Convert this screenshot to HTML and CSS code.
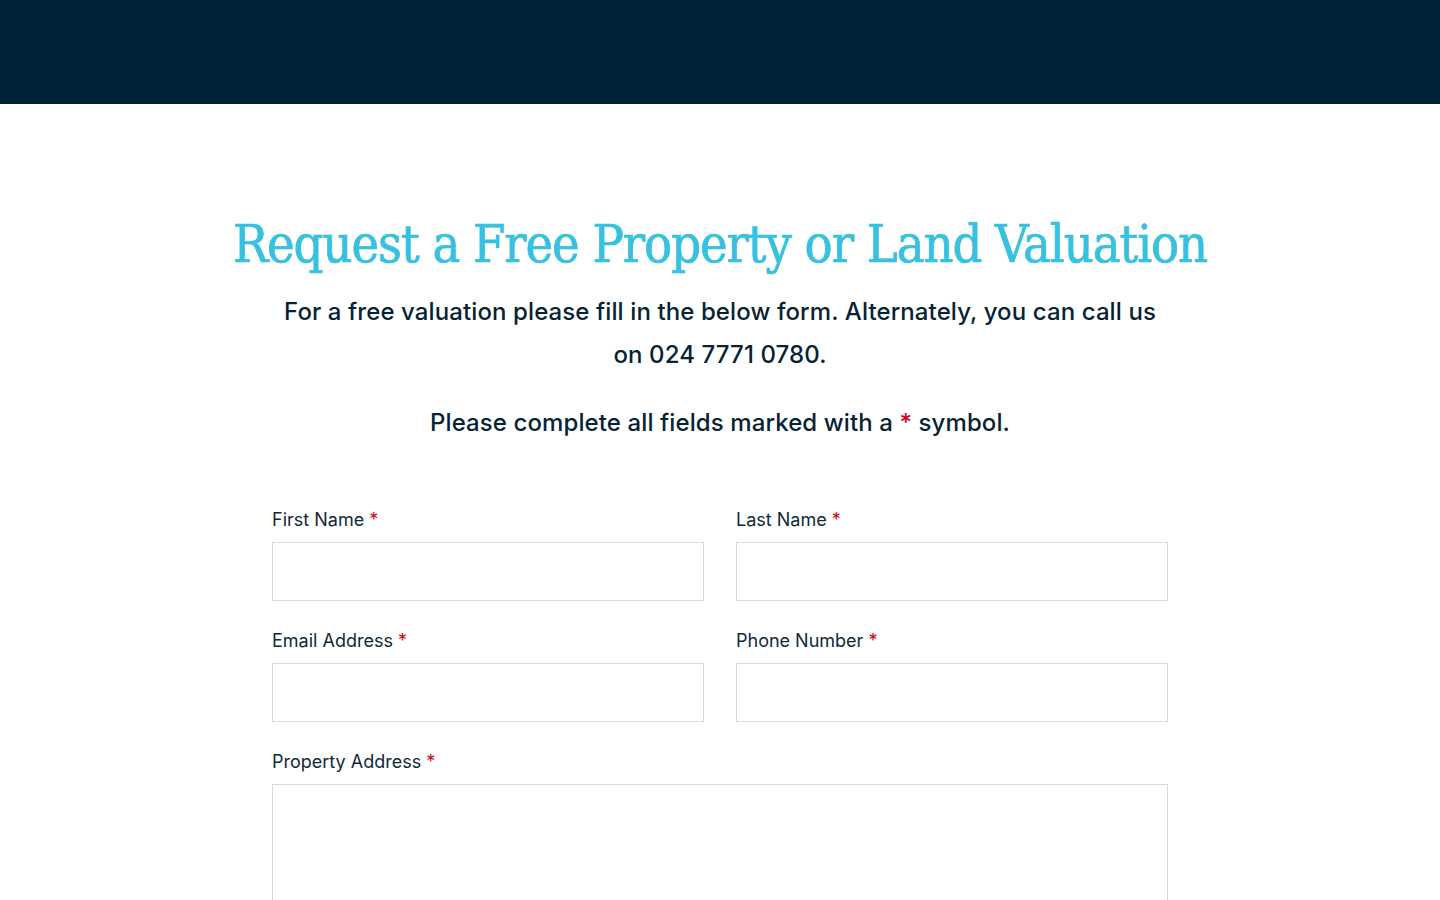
FILE: index.html
```html
<!DOCTYPE html>
<html lang="en">
<head>
<meta charset="utf-8">
<title>Request a Free Property or Land Valuation</title>
<link rel="stylesheet" href="styles.css">
</head>
<body>
<header class="topbar"></header>
<main class="content">
  <h1 class="title">Request a Free Property or Land Valuation</h1>
  <p class="intro">For a free valuation please fill in the below form. Alternately, you can call us on 024 7771 0780.</p>
  <p class="note">Please complete all fields marked with a <span class="req">*</span> symbol.</p>
  <form class="form">
    <div class="field">
      <label class="label">First Name <span class="req">*</span></label>
      <input class="input" type="text">
    </div>
    <div class="field">
      <label class="label">Last Name <span class="req">*</span></label>
      <input class="input" type="text">
    </div>
    <div class="field">
      <label class="label">Email Address <span class="req">*</span></label>
      <input class="input" type="text">
    </div>
    <div class="field">
      <label class="label">Phone Number <span class="req">*</span></label>
      <input class="input" type="text">
    </div>
    <div class="field full">
      <label class="label">Property Address <span class="req">*</span></label>
      <textarea class="textarea"></textarea>
    </div>
  </form>
</main>
</body>
</html>
```
FILE: styles.css
```css
* { box-sizing: border-box; }
html, body { margin: 0; padding: 0; background: #ffffff; }
body { font-family: Inter, "Noto Sans", sans-serif; color: #062335; }
.topbar { height: 104px; background: #00233a; }
.content { width: 896px; margin: 0 auto; padding-top: 102px; display: flex; flex-direction: column; align-items: center; }
.title { font-family: "DejaVu Serif", "Liberation Serif", serif; font-stretch: semi-condensed; font-weight: 400; color: #38c0e0; font-size: 52px; letter-spacing: -1.1px; -webkit-text-stroke: 0.7px #38c0e0; margin: 0; white-space: nowrap; line-height: 76px; }
.intro { max-width: 890px; font-size: 24px; line-height: 43px; text-align: center; margin: 8px 0 0; font-weight: 500; letter-spacing: 0.1px; }
.note { font-size: 24px; line-height: 43px; text-align: center; margin: 25px 0 0; font-weight: 500; letter-spacing: 0.1px; }
.req { color: #d0021b; }
.form { width: 896px; margin-top: 64px; display: grid; grid-template-columns: 1fr 1fr; column-gap: 32px; row-gap: 28px; }
.field { display: flex; flex-direction: column; gap: 10px; }
.full { grid-column: 1 / 3; }
.label { font-size: 18px; line-height: 24px; color: #10293a; letter-spacing: 0; }
.input { height: 59px; border: 1px solid #d9d9d9; border-radius: 0; background: #fff; font: inherit; }
.textarea { height: 160px; border: 1px solid #d9d9d9; border-radius: 0; background: #fff; resize: none; font: inherit; }
```
